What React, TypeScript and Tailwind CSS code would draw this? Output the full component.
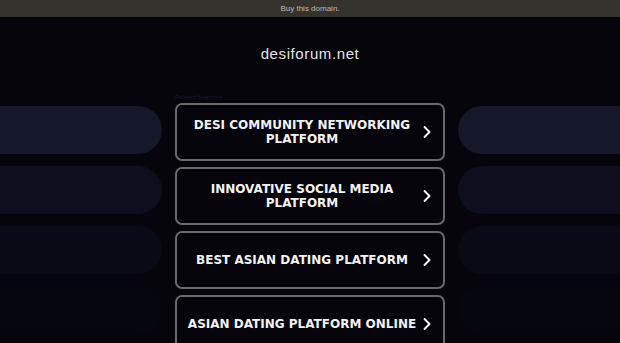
import { ChevronRight } from "lucide-react";

const links = [
  ["DESI COMMUNITY NETWORKING", "PLATFORM"],
  ["INNOVATIVE SOCIAL MEDIA", "PLATFORM"],
  ["BEST ASIAN DATING PLATFORM"],
  ["ASIAN DATING PLATFORM ONLINE"],
];

const pillColors = ["bg-[#141829]", "bg-[#0d0f1e]", "bg-[#080a15]", "bg-[#05070f]"];

export default function App() {
  return (
    <div className="min-h-screen h-[343px] overflow-hidden bg-[#05050b] font-['Liberation_Sans',Arial,sans-serif]">
      <div className="h-[17px] bg-[#36332e] flex items-center justify-center text-[8px] text-[#bdbab4]">
        Buy this domain.
      </div>

      <div className="h-[75px] flex items-center justify-center pb-[1px]">
        <h1 className="text-[15px] text-[#e4e4e6] tracking-[0.6px]">desiforum.net</h1>
      </div>

      <div className="grid grid-cols-[1fr_270px_1fr] gap-x-[13px]">
        <div className="flex flex-col gap-[12px] pt-[14px]">
          {pillColors.map((c) => (
            <div key={c} className={`h-[48px] rounded-r-full ${c}`} />
          ))}
        </div>

        <div className="flex flex-col">
          <div className="h-[11px] text-[6px] leading-[11px] text-[#161833]">Related Searches</div>
          <div className="flex flex-col gap-[6px]">
            {links.map((l) => (
              <div
                key={l[0]}
                className="h-[58px] rounded-[7px] border-2 border-[#6a6a6c] flex items-center pl-[10px] pr-[6px]"
              >
                <div className="flex-1 text-center text-[12px] leading-[14px] font-bold whitespace-nowrap text-[#f2f2f2] font-['DejaVu_Sans',Verdana,sans-serif]">
                  {l.map((t) => (
                    <div key={t}>{t}</div>
                  ))}
                </div>
                <ChevronRight className="w-[20px] h-[20px] text-white shrink-0" strokeWidth={2.2} />
              </div>
            ))}
          </div>
        </div>

        <div className="flex flex-col gap-[12px] pt-[14px]">
          {pillColors.map((c) => (
            <div key={c} className={`h-[48px] rounded-l-full ${c}`} />
          ))}
        </div>
      </div>
    </div>
  );
}
